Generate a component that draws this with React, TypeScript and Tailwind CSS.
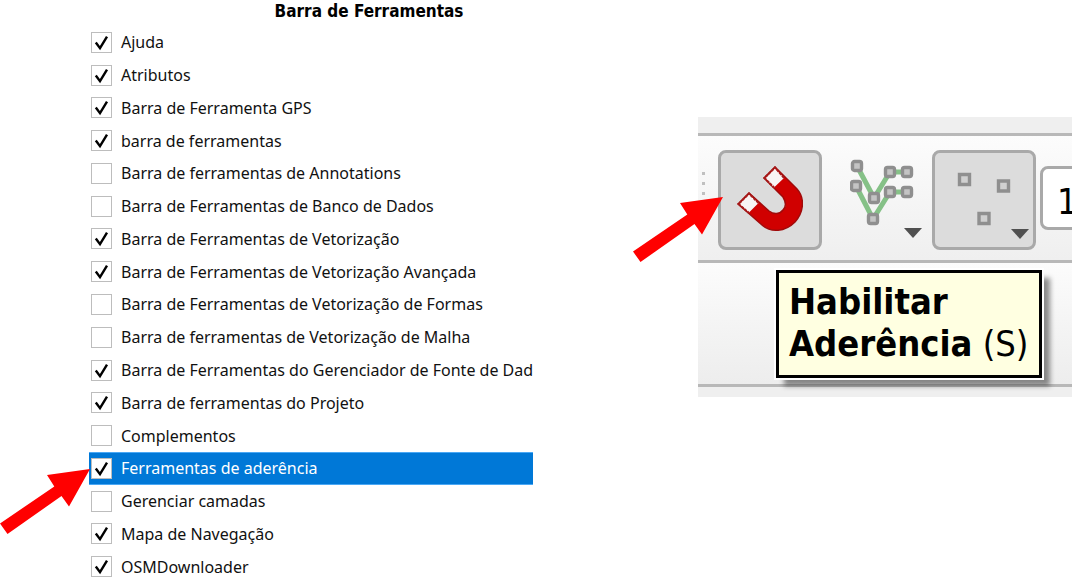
import { useState } from "react";

type Item = { label: string; checked: boolean; selected?: boolean };

const items: Item[] = [
  { label: "Ajuda", checked: true },
  { label: "Atributos", checked: true },
  { label: "Barra de Ferramenta GPS", checked: true },
  { label: "barra de ferramentas", checked: true },
  { label: "Barra de ferramentas de Annotations", checked: false },
  { label: "Barra de Ferramentas de Banco de Dados", checked: false },
  { label: "Barra de Ferramentas de Vetorização", checked: true },
  { label: "Barra de Ferramentas de Vetorização Avançada", checked: true },
  { label: "Barra de Ferramentas de Vetorização de Formas", checked: false },
  { label: "Barra de ferramentas de Vetorização de Malha", checked: false },
  { label: "Barra de Ferramentas do Gerenciador de Fonte de Dad", checked: true },
  { label: "Barra de ferramentas do Projeto", checked: true },
  { label: "Complementos", checked: false },
  { label: "Ferramentas de aderência", checked: true, selected: true },
  { label: "Gerenciar camadas", checked: false },
  { label: "Mapa de Navegação", checked: true },
  { label: "OSMDownloader", checked: true },
];

function RedArrow() {
  return (
    <svg width="92" height="68" viewBox="0 0 92 68" fill="#ff0000" aria-hidden="true">
      <path d="M91 1 48 7 55.3 18.5 1 55.5 8.5 66 62.5 28 70 38.5Z" />
    </svg>
  );
}

function MenuRow({ item }: { item: Item }) {
  const [checked, setChecked] = useState(item.checked);
  return (
    <li
      className={
        item.selected
          ? "relative border-y border-[#4aa8f5] bg-[#0078d7] text-white"
          : "relative border-y border-transparent text-[#111]"
      }
    >
      <label className="flex h-full items-center gap-[9px] overflow-hidden pl-0.5 whitespace-nowrap">
        <span className="grid shrink-0">
          <input
            type="checkbox"
            checked={checked}
            onChange={(e) => setChecked(e.target.checked)}
            className="col-start-1 row-start-1 size-[21px] appearance-none border border-[#bdbdbd] bg-white"
          />
          {checked && (
            <svg
              className="pointer-events-none col-start-1 row-start-1 size-[21px]"
              viewBox="0 0 21 21"
              fill="none"
              stroke="#000"
              strokeWidth="2.4"
              aria-hidden="true"
            >
              <path d="M4.8 10.5 9 16.2 16 4.6" />
            </svg>
          )}
        </span>
        {item.label}
      </label>
      {item.selected && (
        <span className="absolute top-[15px] right-full -mr-0.5">
          <RedArrow />
        </span>
      )}
    </li>
  );
}

function Magnet() {
  return (
    <svg width="66" height="66" viewBox="0 0 66 66" aria-hidden="true">
      <path
        d="M38 1 60 23C68 32 67 46 58 56C48 66 34 67 25 59L1 38 12 27 32 45C37 49 43 48 46 44C50 40 49 36 46 31L27 12Z"
        fill="#d00000"
        stroke="#a00a0a"
        strokeWidth="1.5"
      />
      <path d="M38 2.5 47 12 37 21.5 28.5 12ZM12 28.5 21.5 37 12 46.5 2.5 38Z" fill="#f8f4f4" />
      <path d="M47 12 38 1.500 27.5 12 37 21.5M21.5 37 12 27.500 1.500 38 12 47" fill="none" stroke="#a51c1c" strokeWidth="2" strokeDasharray="3 1" />
    </svg>
  );
}

const vertices: [number, number][] = [
  [7, 7], [6, 27], [24, 39], [40, 13], [57, 13], [40, 33], [57, 33], [23, 60],
];

function VertexIcon() {
  return (
    <svg width="66" height="68" viewBox="0 0 66 68" fill="none" aria-hidden="true">
      <path d="M7 7 24 39 40 13H57M6 27 23 60 40 33H57" stroke="#85c187" strokeWidth="5" />
      {vertices.map(([x, y]) => (
        <rect key={`${x}-${y}`} x={x - 4.5} y={y - 4.5} width="9" height="9" rx="2" fill="#c4c4c4" stroke="#8f8f8f" strokeWidth="3.4" />
      ))}
    </svg>
  );
}

function PointsIcon() {
  return (
    <svg width="56" height="56" viewBox="0 0 56 56" fill="#d0d0d0" stroke="#8f8f8f" strokeWidth="3.4" aria-hidden="true">
      <path d="M3.500 3.500h10v10h-10zM42.500 10h10v10h-10zM23 42.500h10v10h-10z" />
    </svg>
  );
}

function DropArrow() {
  return (
    <svg width="18" height="10" viewBox="0 0 18 10" aria-hidden="true">
      <path d="M0 0H18L9 10Z" fill="#505050" />
    </svg>
  );
}

export default function App() {
  return (
    <main className="grid h-screen grid-cols-[89fr_444fr_165fr_374fr] items-start overflow-hidden bg-white font-['Noto_Sans',sans-serif] text-black">
      <section className="col-start-2 flex h-screen min-w-0 flex-col text-base">
        <h1 className="h-[26px] shrink-0 pl-[116px] text-center font-['DejaVu_Sans_Condensed','DejaVu_Sans',sans-serif] text-[17px] leading-[22px] font-bold whitespace-nowrap">
          Barra de Ferramentas
        </h1>
        <ul className="-mb-[5px] grid flex-1 auto-rows-fr">
          {items.map((item) => (
            <MenuRow key={item.label} item={item} />
          ))}
        </ul>
      </section>

      <section className="relative col-start-4 mt-[117px] min-w-0 bg-[#efefef] pt-4 pb-2.5 font-['DejaVu_Sans_Condensed','DejaVu_Sans',sans-serif] text-4xl">
        <div className="flex h-[130px] items-start overflow-hidden border-y-[3px] border-[#b8b8b8] bg-linear-to-b from-[#fcfcfc] to-[#efefef] pt-3.5">
          <svg className="mt-[22px] mr-3 ml-1 shrink-0" width="4" height="24" viewBox="0 0 4 24" fill="#c0c0c0" aria-hidden="true">
            <path d="M0 0h3v3H0zM0 10h3v3H0zM0 20h3v3H0z" />
          </svg>
          <button aria-label="Habilitar Aderência" className="flex h-[100px] w-[104px] shrink-0 items-center justify-center rounded-lg border-[3px] border-[#a9a9a9] bg-[#dcdcdc] pb-[3px]">
            <Magnet />
          </button>
          <button aria-label="Modo de aderência" className="relative flex h-[100px] w-[110px] shrink-0 items-start pt-[9px] pl-7">
            <VertexIcon />
            <span className="absolute right-2.5 bottom-3 leading-none">
              <DropArrow />
            </span>
          </button>
          <button aria-label="Tipo de aderência" className="relative flex h-[100px] w-[104px] shrink-0 items-center justify-center rounded-lg border-[3px] border-[#a9a9a9] bg-[#dcdcdc] pb-[3px]">
            <PointsIcon />
            <span className="absolute right-1 bottom-2 leading-none">
              <DropArrow />
            </span>
          </button>
          <input
            aria-label="Tolerância"
            defaultValue="12"
            className="mt-4 ml-1 h-16 w-20 shrink-0 rounded-lg border-[3px] border-[#a9a9a9] bg-white pt-1.5 pl-3.5"
          />
        </div>
        <div className="h-[124px] border-b-[3px] border-[#b8b8b8] bg-linear-to-b from-[#fcfcfc] to-[#ededed]" />
        <div role="tooltip" className="absolute top-[153px] left-[78px] border-[3px] border-black bg-[#ffffe1] px-2.5 pt-2 pb-2.5 leading-[42px] whitespace-nowrap shadow-[8px_8px_5px_#00000070] outline-2 outline-white">
          <strong>Habilitar<br />Aderência</strong> (S)
        </div>
        <span className="absolute top-[79px] -left-[66px]">
          <RedArrow />
        </span>
      </section>
    </main>
  );
}
